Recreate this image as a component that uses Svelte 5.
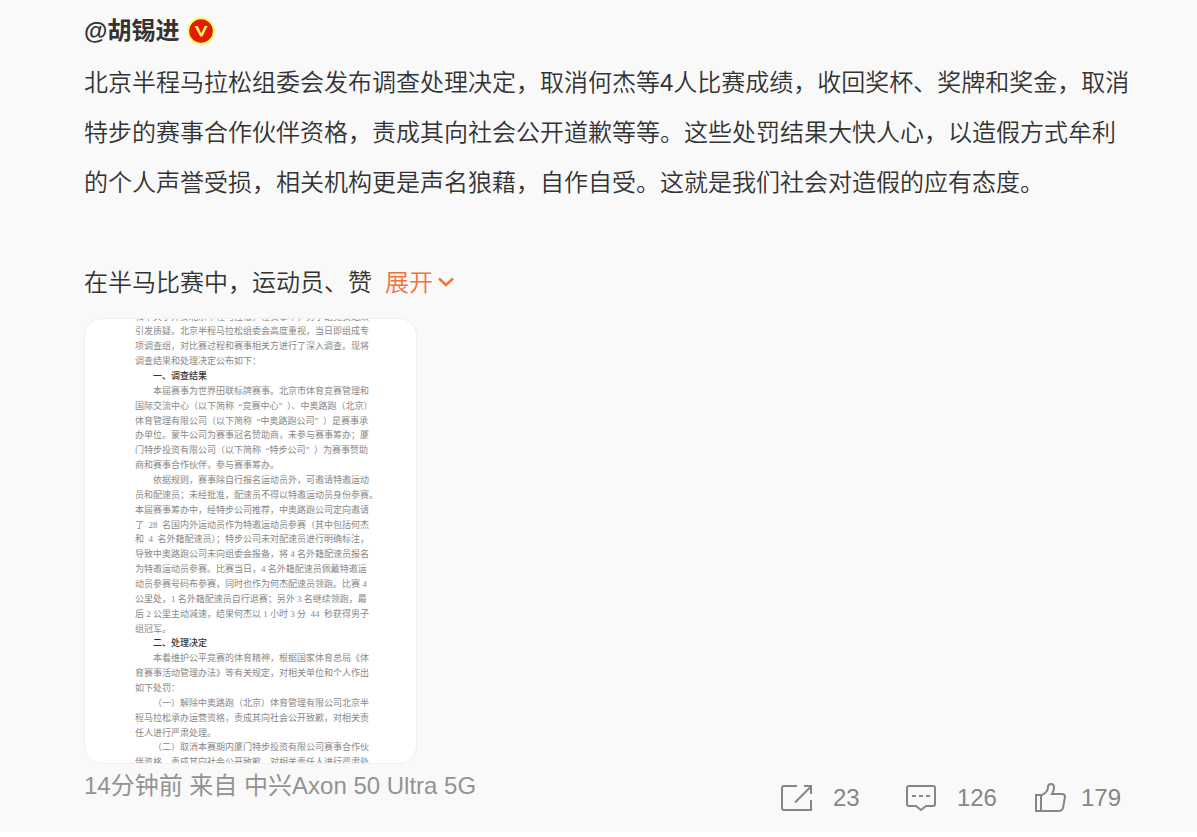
<script>
  const linePitch = 14.86;

  const notice = [
    { text: '和下关于开赛北京半程马拉松，在赛事中，男子组竞赛结果' },
    { text: '引发质疑。北京半程马拉松组委会高度重视，当日即组成专' },
    { text: '项调查组，对比赛过程和赛事相关方进行了深入调查。现将' },
    { text: '调查结果和处理决定公布如下：' },
    { text: '一、调查结果', indent: true, heading: true },
    { text: '本届赛事为世界田联标牌赛事。北京市体育竞赛管理和', indent: true },
    { text: '国际交流中心（以下简称\u2002“竞赛中心”\u2002）、中奥路跑（北京）' },
    { text: '体育管理有限公司（以下简称\u2002“中奥路跑公司”\u2002）是赛事承' },
    { text: '办单位。蒙牛公司为赛事冠名赞助商，未参与赛事筹办；厦' },
    { text: '门特步投资有限公司（以下简称\u2002“特步公司”\u2002）为赛事赞助' },
    { text: '商和赛事合作伙伴，参与赛事筹办。' },
    { text: '依据规则，赛事除自行报名运动员外，可邀请特邀运动', indent: true },
    { text: '员和配速员；未经批准，配速员不得以特邀运动员身份参赛。' },
    { text: '本届赛事筹办中，经特步公司推荐，中奥路跑公司定向邀请' },
    { text: '了\u200228\u2002名国内外运动员作为特邀运动员参赛（其中包括何杰' },
    { text: '和\u20024\u2002名外籍配速员）；特步公司未对配速员进行明确标注，' },
    { text: '导致中奥路跑公司未向组委会报备，将 4 名外籍配速员报名' },
    { text: '为特邀运动员参赛。比赛当日，4 名外籍配速员佩戴特邀运' },
    { text: '动员参赛号码布参赛，同时也作为何杰配速员领跑。比赛 4' },
    { text: '公里处，1 名外籍配速员自行退赛；另外 3 名继续领跑，最' },
    { text: '后 2 公里主动减速，结果何杰以 1 小时 3 分\u200244\u2002秒获得男子' },
    { text: '组冠军。' },
    { text: '二、处理决定', indent: true, heading: true },
    { text: '本着维护公平竞赛的体育精神，根据国家体育总局《体', indent: true },
    { text: '育赛事活动管理办法》等有关规定，对相关单位和个人作出' },
    { text: '如下处罚：' },
    { text: '（一）解除中奥路跑（北京）体育管理有限公司北京半', indent: true },
    { text: '程马拉松承办运营资格，责成其向社会公开致歉，对相关责' },
    { text: '任人进行严肃处理。' },
    { text: '（二）取消本赛期内厦门特步投资有限公司赛事合作伙', indent: true },
    { text: '伴资格，责成其向社会公开致歉，对相关责任人进行严肃处' }
  ];
</script>

<article class="post" lang="zh-CN">
  <header class="author">
    <a class="name" href="#author">@胡锡进</a>
    <svg class="badge" viewBox="0 0 28 28" aria-hidden="true">
      <circle cx="14" cy="14" r="12.8" fill="#e31b00" stroke="#ffff5a" stroke-width="2" />
      <path d="M7.6 9h3.2l3.5 7.4L17.6 9h3l-5.2 10.4h-2.2z" fill="#fff06a" />
    </svg>
  </header>

  <p class="body">
    北京半程马拉松组委会发布调查处理决定，取消何杰等<span class="digit">4</span>人比赛成绩，收回奖杯、奖牌和奖金，取消特步的赛事合作伙伴资格，责成其向社会公开道歉等等。这些处罚结果大快人心，以造假方式牟利的个人声誉受损，相关机构更是声名狼藉，自作自受。这就是我们社会对造假的应有态度。<br /><br />在半马比赛中，运动员、赞<button class="expand" type="button">展开<svg viewBox="0 0 18 12" aria-hidden="true"><path d="M2 2.5l7 6.5 7-6.5" /></svg></button>
  </p>

  <a class="picture" href="#picture" aria-label="调查处理决定">
    <svg viewBox="0 0 331 444">
      {#each notice as line, i}
        <text
          class:heading={line.heading}
          x={line.indent ? 68 : 50}
          y={i * linePitch + 0.5}
        >{line.text}</text>
      {/each}
    </svg>
  </a>

  <footer>
    <p class="meta">14分钟前 来自 中兴Axon 50 Ultra 5G</p>
    <div class="actions">
      <button type="button" aria-label="转发 23">
        <svg viewBox="0 0 34 32" aria-hidden="true">
          <path d="M16 4H3Q1 4 1 6V26Q1 28 3 28H30V18M14 20.500L29.500 5M23 4H30V12" />
        </svg>
        <span>23</span>
      </button>
      <button type="button" aria-label="评论 126">
        <svg viewBox="0 0 34 32" aria-hidden="true">
          <path d="M4 4H28Q30 4 30 6V22Q30 24 28 24H21L16 28L11 24H4Q2 24 2 22V6Q2 4 4 4Z" />
          <path d="M7 14h4M14 14h4M21 14h4" />
        </svg>
        <span>126</span>
      </button>
      <button type="button" aria-label="赞 179">
        <svg viewBox="0 0 34 32" aria-hidden="true">
          <path d="M7 13H13C17 11 19 9 19 5Q19 2 22 2Q25 2 25 5Q25 9 23 12H33Q36 12 36 15L34 26Q33 29 30 29H7ZM12 13V29" />
        </svg>
        <span>179</span>
      </button>
    </div>
  </footer>
</article>

<style>
  :global(body) {
    margin: 0;
    background: #fff;
  }

  .post {
    padding: 6px 64px 18px 84px;
    background: #f9f9f9;
    color: #333;
    font-family: "Liberation Sans", "Noto Sans CJK SC", sans-serif;
    font-size: 24px;
  }

  .author {
    display: flex;
    align-items: center;
    gap: 8px;
    height: 50px;
  }

  .name {
    color: #333;
    font-weight: 700;
    line-height: 32px;
    text-decoration: none;
  }

  .badge {
    width: 28px;
    height: 28px;
  }

  .body {
    margin: 2px 0 0;
    font-weight: 350;
    line-height: 50px;
  }

  .digit {
    font-weight: 400;
  }

  button {
    padding: 0;
    border: 0;
    background: none;
    color: inherit;
    font: inherit;
    cursor: pointer;
  }

  .expand {
    margin-left: 13px;
    color: #f2713c;
    font-weight: 350;
  }

  .expand svg {
    width: 18px;
    height: 12px;
    margin-left: 4px;
    vertical-align: 3px;
    fill: none;
    stroke: currentColor;
    stroke-width: 2.5;
  }

  .picture {
    display: block;
    width: 333px;
    margin-top: 10px;
    overflow: hidden;
    box-sizing: border-box;
    border: 1px solid #efefef;
    border-radius: 18px;
    background: #fff;
  }

  .picture svg {
    display: block;
    width: 100%;
  }

  .picture text {
    fill: #888;
    font-family: "Liberation Serif", "Noto Sans CJK SC", serif;
    font-size: 9px;
    font-weight: 400;
  }

  .picture .heading {
    fill: #333;
    font-weight: 500;
  }

  footer {
    display: flex;
    align-items: flex-start;
    justify-content: space-between;
    color: #939393;
  }

  .meta {
    margin: 0;
    line-height: 44px;
  }

  .actions {
    display: flex;
    gap: 32px;
    margin: 18px 12px 0 0;
    color: #868686;
  }

  .actions button {
    display: flex;
    align-items: center;
    gap: 18px;
  }

  .actions svg {
    width: 34px;
    height: 32px;
    overflow: visible;
    fill: none;
    stroke: currentColor;
    stroke-width: 2;
  }

  .actions span {
    min-width: 40px;
    text-align: left;
  }
</style>
